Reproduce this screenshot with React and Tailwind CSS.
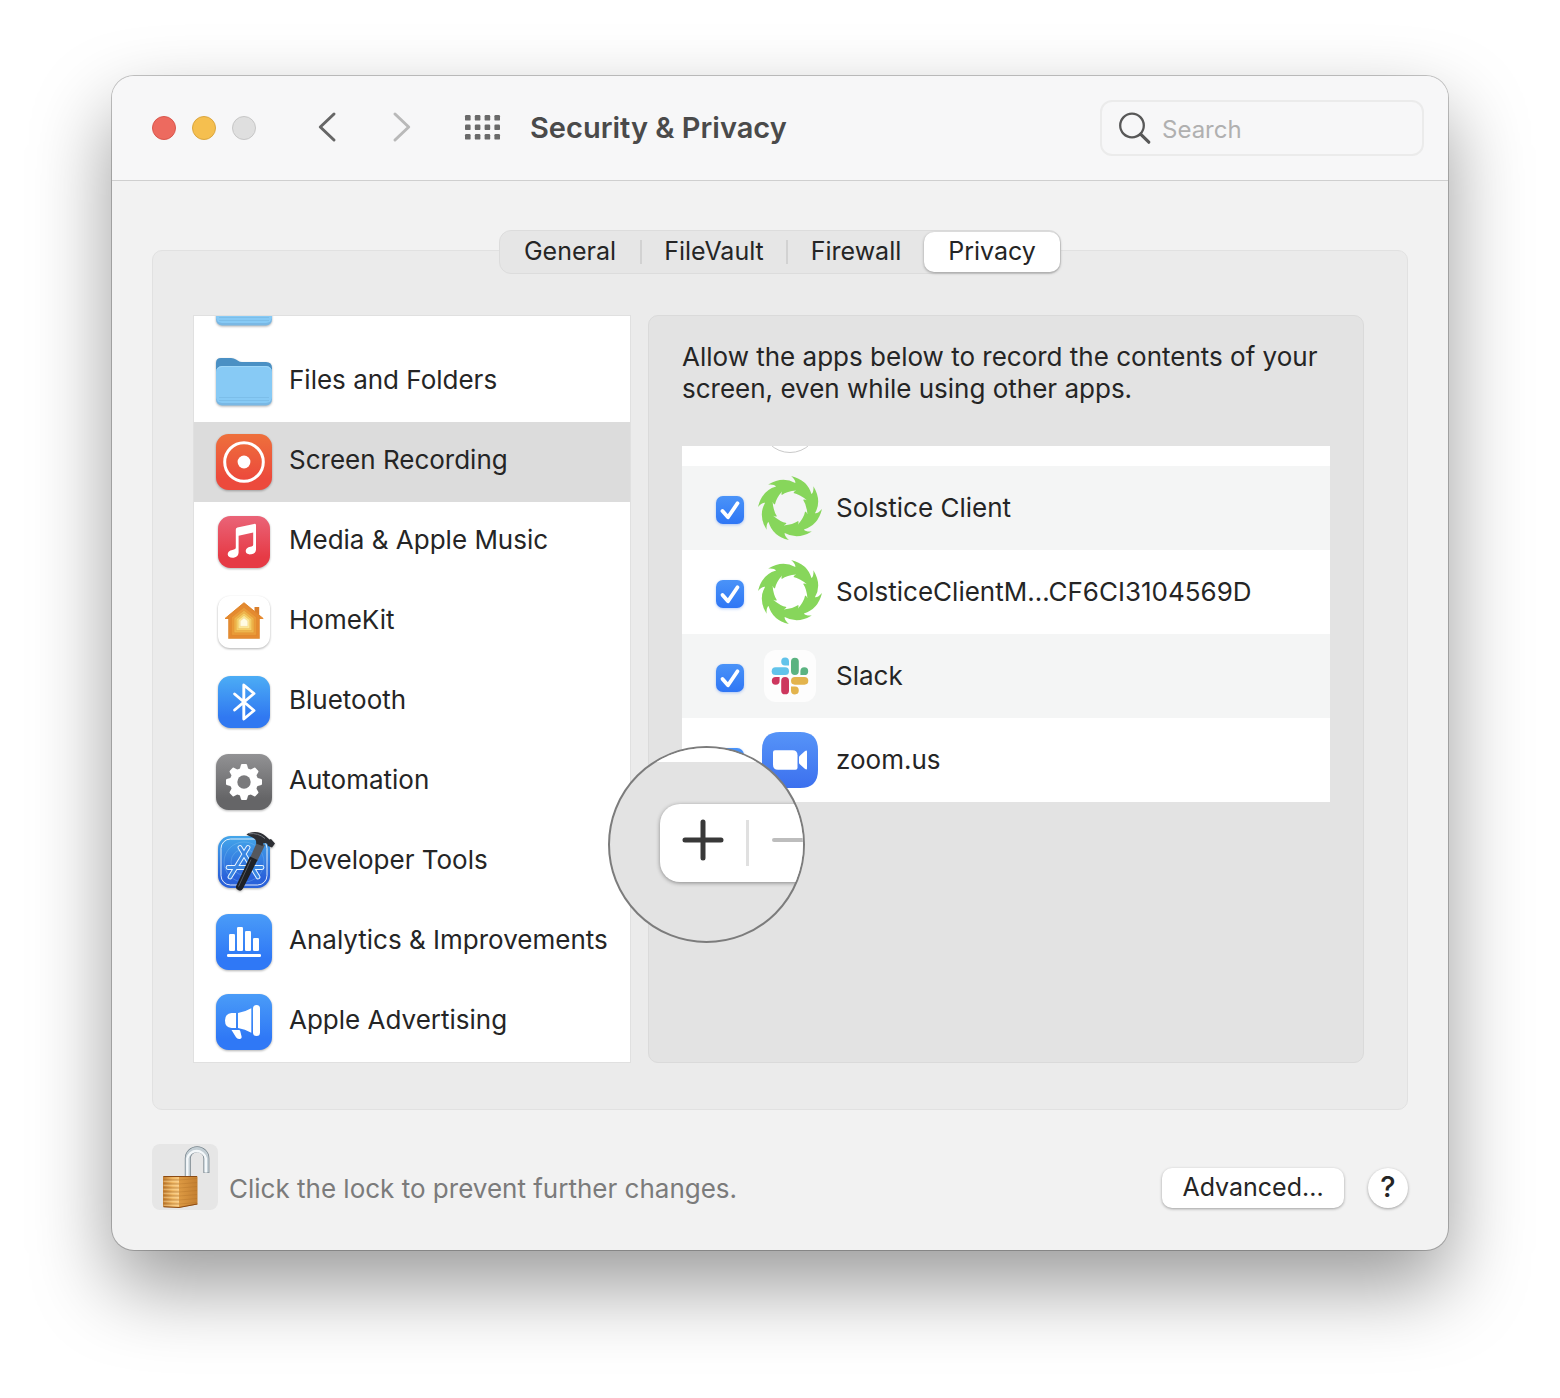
import { useState } from "react";

function Tile({ id, from, to, inset = 0 }) {
  const size = 56 - inset * 2;
  return (
    <>
      <linearGradient id={id} x1="0" y1="0" x2="0" y2="1">
        <stop offset="0" stopColor={from} />
        <stop offset="0.8" stopColor={to} />
      </linearGradient>
      <rect x={inset} y={inset} width={size} height={size} rx="12.5" fill={`url(#${id})`} />
    </>
  );
}

function IconBox({ children }) {
  return (
    <svg
      viewBox="0 0 56 56"
      className="size-14 shrink-0 overflow-visible drop-shadow-[0_1px_1px_rgba(0,0,0,0.3)]"
      aria-hidden="true"
    >
      {children}
    </svg>
  );
}

function FolderIcon() {
  return (
    <IconBox>
      <path d="M0 18V9q0-5 5-5h10q3 0 5 1.500l2 1.300q1.500 1.200 4 1.200h24q6 0 6 6v6z" fill="#4a90c4" />
      <rect y="12" width="56" height="39.5" rx="6" fill="#7ab8e4" />
      <rect y="12" width="56" height="37" rx="6" fill="#87caf5" />
      <path d="M3 43.500h50M3 46.500h50" stroke="#7abbe6" strokeWidth="0.8" />
      <path d="M1 15.500q1.500-3 5-3h44q3.500 0 5 3" fill="none" stroke="#a5dafa" strokeWidth="0.8" />
    </IconBox>
  );
}

function ScreenRecordingIcon() {
  return (
    <IconBox>
      <Tile id="rec" from="#ee703c" to="#ec4a3c" />
      <circle cx="28" cy="28" r="19.3" fill="none" stroke="#fff" strokeWidth="3" />
      <circle cx="28" cy="28" r="6.4" fill="#fff" />
    </IconBox>
  );
}

function MusicIcon() {
  return (
    <IconBox>
      <Tile id="music" from="#ea6478" to="#e63a45" inset={2} />
      <path
        d="M19.800 15.400q0-1.500 1.600-1.900l16.600-3.600q2-.4 2 1.300V35.500c0 2.700-1.800 4.200-4.700 4.800-3 .6-5.600-.7-5.600-3.200 0-2.400 2-3.800 4.600-4.300 2-.4 2.900-.9 2.900-2.300V18.400L22.600 21.700V38.500c0 2.700-1.700 4.600-4.900 5.200-3.200.5-6-.8-6-3.400 0-2.300 1.800-3.700 4.700-4.300 2.400-.4 3.400-.9 3.400-2.400z"
        fill="#fff"
      />
    </IconBox>
  );
}

const HOUSES = [
  { scale: 1, fill: "#e58a30" },
  { scale: 0.8, fill: "#eb9c39" },
  { scale: 0.64, fill: "#efb54c" },
  { scale: 0.5, fill: "#f5d068" },
  { scale: 0.37, fill: "#fbe99a" },
  { scale: 0.24, fill: "#fffbe3" },
];

function HomeKitIcon() {
  return (
    <IconBox>
      <rect x="2" y="2" width="52" height="52" rx="12" fill="#fff" />
      <path d="M38.500 13h4.700v10h-4.700z" fill="#d97f2c" />
      <path d="M9 24.500 28 8.700 47.200 24.500z" fill="#e58a30" stroke="#e58a30" strokeLinejoin="round" />
      {HOUSES.map(({ scale, fill }) => (
        <path
          key={scale}
          d="M-15.500 16V-6.500L0-19 15.500-6.500V16z"
          transform={`translate(28 28.5) scale(${scale})`}
          fill={fill}
          stroke="#d9862b"
          strokeWidth="0.9"
          strokeOpacity="0.6"
          strokeLinejoin="round"
        />
      ))}
    </IconBox>
  );
}

function BluetoothIcon() {
  return (
    <IconBox>
      <Tile id="bluetooth" from="#4cadf5" to="#3078f1" inset={2} />
      <path
        d="M18.600 20 38 36.500 27.800 45V11L38 19.500 18.600 36"
        fill="none"
        stroke="#fff"
        strokeWidth="2.9"
        strokeLinecap="round"
        strokeLinejoin="round"
      />
    </IconBox>
  );
}

function AutomationIcon() {
  return (
    <IconBox>
      <Tile id="gear" from="#929294" to="#656567" />
      <circle cx="28" cy="28" r="14" fill="#fff" />
      {[0, 45, 90, 135, 180, 225, 270, 315].map((angle) => (
        <path
          key={angle}
          d="M23.500 16 25 10.700q.3-.7 1-.7h4q.7 0 1 .7L32.500 16z"
          transform={`rotate(${angle} 28 28)`}
          fill="#fff"
        />
      ))}
      <circle cx="28" cy="28" r="6.7" fill="#7a7a7c" />
    </IconBox>
  );
}

const TOOLS_PATH = "M32 13.500 14 43M24 13.500 42 43M12 33.500h34";

function DeveloperToolsIcon() {
  return (
    <IconBox>
      <Tile id="tools" from="#44a6ea" to="#2a62da" inset={2} />
      <rect x="5" y="5" width="46" height="46" rx="9.5" fill="none" stroke="#fff" strokeOpacity="0.85" />
      <circle cx="28" cy="28" r="20" fill="none" stroke="#8fcaf5" strokeWidth="0.6" strokeOpacity="0.5" />
      <circle cx="28" cy="28" r="13" fill="none" stroke="#8fcaf5" strokeWidth="0.6" strokeOpacity="0.5" />
      <path d={TOOLS_PATH} fill="none" stroke="#e9f5ff" strokeWidth="4.8" strokeLinecap="round" />
      <path d={TOOLS_PATH} fill="none" stroke="#3a86e2" strokeWidth="2.8" strokeLinecap="round" />
      <path d="M41 8 49 11 41 27.500 34 24z" fill="#55585e" />
      <path d="M34 22.500 41.500 26 27 54.500q-1.500 3-4.500 1.800-3.500-1.300-2.300-4.500z" fill="#1f2126" />
      <path d="M35 25.500 22.500 52.500" stroke="#555961" strokeWidth="1" />
      <path
        d="M30.500.5Q33-2 39-2q6 0 10.500 4l4 3.500 1.500-.5 4 4.500-3 4-4-1.500-1-2.500-3.500-.5-1 3-6.500-2.500Q41 5.500 36.500 3.500 33 2 30.500.5z"
        fill="#2c2e33"
      />
      <path d="M33-.2Q42-1.500 49 4.500" fill="none" stroke="#777b82" strokeWidth="1" />
    </IconBox>
  );
}

function AnalyticsIcon() {
  return (
    <IconBox>
      <Tile id="analytics" from="#4a9cf8" to="#2f78f6" />
      <g fill="#fff">
        <rect x="13" y="20" width="6" height="17" rx="1.3" />
        <rect x="21" y="13" width="6" height="24" rx="1.3" />
        <rect x="29" y="17" width="6" height="20" rx="1.3" />
        <rect x="37" y="24" width="6" height="13" rx="1.3" />
        <rect x="11" y="40" width="34" height="3" rx="1.3" />
      </g>
    </IconBox>
  );
}

function AdvertisingIcon() {
  return (
    <IconBox>
      <Tile id="ads" from="#4a9cf8" to="#2f78f6" />
      <g fill="#fff">
        <rect x="37" y="11" width="7" height="31" rx="3.5" />
        <path d="M22 19Q29 18 35.300 14.300V38.800Q29 35 22 34z" />
        <path d="M20 19V34H15.500Q9 33.500 9 26.500T15.500 19z" />
        <path d="M15.500 36H23q1 0 1.200 1l1.400 5.500q.4 2.300-2 2.500-2.300.3-3.600-1.700z" />
      </g>
    </IconBox>
  );
}

const CATEGORIES = [
  { label: "Files and Folders", Icon: FolderIcon },
  { label: "Screen Recording", Icon: ScreenRecordingIcon },
  { label: "Media & Apple Music", Icon: MusicIcon },
  { label: "HomeKit", Icon: HomeKitIcon },
  { label: "Bluetooth", Icon: BluetoothIcon },
  { label: "Automation", Icon: AutomationIcon },
  { label: "Developer Tools", Icon: DeveloperToolsIcon },
  { label: "Analytics & Improvements", Icon: AnalyticsIcon },
  { label: "Apple Advertising", Icon: AdvertisingIcon },
];

// point on a circle around the middle of the 64px icon, 0deg = top
function polar(radius, degrees) {
  const a = ((degrees - 90) * Math.PI) / 180;
  return `${(32 + radius * Math.cos(a)).toFixed(1)} ${(32 + radius * Math.sin(a)).toFixed(1)}`;
}

// closed ring of eight hooked teeth; dir -1 hooks them the other way
function swirl({ tip, mid, notch, nose, hook, start, dir }) {
  let d = `M${polar(tip, start)}`;
  for (let i = 0; i < 8; i++) {
    const t = start + dir * i * 45;
    d += `Q${polar(mid, t + dir * 30)} ${polar(notch, t + dir * (45 + hook))}`;
    d += `Q${polar(nose, t + dir * (45 + hook))} ${polar(tip, t + dir * 45)}`;
  }
  return `${d}Z`;
}

const SWIRL_PATH =
  swirl({ tip: 32, mid: 33, notch: 25.5, nose: 28.5, hook: 10, start: 2, dir: 1 }) +
  swirl({ tip: 18.5, mid: 17, notch: 15.5, nose: 17, hook: 7, start: 20, dir: -1 });

function SolsticeIcon() {
  return (
    <svg viewBox="0 0 64 64" className="size-16 shrink-0" aria-hidden="true">
      <path d={SWIRL_PATH} fill="#87d65b" fillRule="evenodd" />
    </svg>
  );
}

function SlackIcon() {
  return (
    <svg viewBox="0 0 64 64" className="size-16 shrink-0" aria-hidden="true">
      <rect x="6" y="6" width="52" height="52" rx="12" fill="#fdfdfd" />
      <g fill="#62c3ea">
        <rect x="13.7" y="23.3" width="17.3" height="7.7" rx="3.85" />
        <path d="M31 21.400h-4a3.900 3.900 0 1 1 4-3.900z" />
      </g>
      <g fill="#5bb381">
        <rect x="33" y="13.7" width="7.8" height="17.3" rx="3.9" />
        <path d="M42.400 31v-4a3.900 3.900 0 1 1 3.900 4z" />
      </g>
      <g fill="#cd375e">
        <rect x="23.2" y="33" width="7.8" height="17.3" rx="3.9" />
        <path d="M21.600 33v4a3.900 3.900 0 1 1-3.900-4z" />
      </g>
      <g fill="#e3b44d">
        <rect x="33" y="33" width="17.3" height="7.7" rx="3.85" />
        <path d="M33 42.600h4a3.900 3.900 0 1 1-4 3.900z" />
      </g>
    </svg>
  );
}

function ZoomIcon() {
  return (
    <svg viewBox="0 0 64 64" className="size-16 shrink-0" aria-hidden="true">
      <linearGradient id="zoom" x1="0" y1="0" x2="0" y2="1">
        <stop offset="0" stopColor="#5694f8" />
        <stop offset="1" stopColor="#3c70ee" />
      </linearGradient>
      <path d="M22 4h20q18 0 18 18v20q0 18-18 18H22Q4 60 4 42V22Q4 4 22 4z" fill="url(#zoom)" />
      <path d="M17 22.300h17.500q5 0 5 5v12.400q0 2-2 2H20q-5 0-5-5V24.300q0-2 2-2z" fill="#fff" />
      <path d="M41 29.500q0-1 .8-1.700l5-4.500q2.200-1.800 2.200.5v16.400q0 2.300-2.200.5l-5-4.500q-.8-.7-.8-1.700z" fill="#fff" />
    </svg>
  );
}

function BlankAppIcon() {
  return (
    <svg viewBox="0 0 64 64" className="size-16 shrink-0" aria-hidden="true">
      <circle cx="32" cy="32" r="28.5" fill="#fff" stroke="#c9c9c9" />
    </svg>
  );
}

const APPS = [
  { label: "Solstice Client", Icon: SolsticeIcon },
  { label: "SolsticeClientM…CF6CI3104569D", Icon: SolsticeIcon },
  { label: "Slack", Icon: SlackIcon },
  { label: "zoom.us", Icon: ZoomIcon },
];

function AppRow({ label, Icon }) {
  return (
    <li className="odd:bg-white even:bg-[#f4f5f5]">
      <label className="flex h-21 items-center gap-3.5 pl-[34px]">
        <span className="mt-1 grid size-7 shrink-0">
          <input
            type="checkbox"
            defaultChecked
            className="peer col-start-1 row-start-1 size-7 appearance-none rounded-[7px] border border-gray-300 bg-white shadow-[0_1px_3px_rgba(40,110,240,0.35)] checked:border-0 checked:bg-linear-to-b checked:from-[#4a93f8] checked:to-[#2f76f5]"
          />
          <svg
            viewBox="0 0 28 28"
            className="pointer-events-none invisible col-start-1 row-start-1 peer-checked:visible"
            aria-hidden="true"
          >
            <path
              d="M6.500 15 12 21.300 21.500 7.300"
              fill="none"
              stroke="#fff"
              strokeWidth="3.8"
              strokeLinecap="round"
              strokeLinejoin="round"
            />
          </svg>
        </span>
        <Icon />
        <span>{label}</span>
      </label>
    </li>
  );
}

function Magnifier() {
  return (
    <div className="absolute top-[430px] -left-[41px] z-10 size-[197px] overflow-hidden rounded-full border-2 border-[#7c7c7c] bg-[#e3e3e3]">
      <div className="h-3.5 bg-white" />
      <div className="mt-[42px] ml-[50px] flex h-[78px] w-44 items-center rounded-[20px] bg-white shadow-[0_1px_4px_rgba(0,0,0,0.4)]">
        <button type="button" aria-label="Add app" className="grid h-full w-[86px] place-items-center pb-1.5">
          <svg viewBox="0 0 42 42" className="size-[42px]" aria-hidden="true">
            <path d="M3 21h36M21 3v36" stroke="#383838" strokeWidth="5" strokeLinecap="round" />
          </svg>
        </button>
        <span className="h-[46px] w-[3px] bg-[#e0e0e0]" />
        <button type="button" aria-label="Remove app" className="grid h-full w-[86px] place-items-center pb-1.5">
          <svg viewBox="0 0 42 42" className="size-[42px]" aria-hidden="true">
            <path d="M3 21h36" stroke="#bdbdbd" strokeWidth="4" strokeLinecap="round" />
          </svg>
        </button>
      </div>
    </div>
  );
}

function TitleBar() {
  return (
    <header className="flex h-[105px] items-center border-b border-[#cfcfcf] bg-[#f7f7f8] pr-6 pl-10">
      <div className="flex gap-4">
        <button type="button" aria-label="Close" className="size-6 rounded-full border border-[#d9574d] bg-[#ed6a5f]" />
        <button type="button" aria-label="Minimize" className="size-6 rounded-full border border-[#dba63f] bg-[#f5bf4f]" />
        <button type="button" aria-label="Full screen" className="size-6 rounded-full border border-[#c6c6c6] bg-[#dfdfdf]" />
      </div>
      <button type="button" aria-label="Back" className="ml-[51px] h-10 w-10">
        <svg viewBox="0 0 40 40" fill="none" aria-hidden="true">
          <path d="M27 6 13.300 19 27 32" stroke="#666" strokeWidth="3" strokeLinecap="round" strokeLinejoin="round" />
        </svg>
      </button>
      <button type="button" aria-label="Forward" className="ml-[35px] h-10 w-10">
        <svg viewBox="0 0 40 40" fill="none" aria-hidden="true">
          <path d="M13 6 26.700 19 13 32" stroke="#b9b9b9" strokeWidth="3" strokeLinecap="round" strokeLinejoin="round" />
        </svg>
      </button>
      <button type="button" aria-label="Show all" className="ml-[41px] h-10 w-10">
        <svg viewBox="0 0 40 40" fill="#6a6a6a" aria-hidden="true">
          {[7, 16.5, 26].map((y) =>
            [2, 11.8, 21.6, 31.4].map((x) => (
              <rect key={`${x}-${y}`} x={x} y={y} width="5.6" height="5.6" rx="1.2" />
            ))
          )}
        </svg>
      </button>
      <h1 className="ml-[27px] text-[29px] leading-8 font-semibold text-[#4a4a4a]">Security &amp; Privacy</h1>
      <label className="ml-auto flex h-14 w-[324px] items-center gap-2.5 rounded-xl border-2 border-[#ebebeb] pl-4">
        <svg viewBox="0 0 34 34" fill="none" className="size-[34px] shrink-0" aria-hidden="true">
          <circle cx="14" cy="14.5" r="11.8" stroke="#585858" strokeWidth="2.3" />
          <path d="M22.600 23.200 30.800 31.200" stroke="#585858" strokeWidth="3.2" strokeLinecap="round" />
        </svg>
        <input
          type="search"
          placeholder="Search"
          aria-label="Search"
          className="w-full min-w-0 bg-transparent pt-1 text-[24px] outline-none placeholder:text-[#b0b0b0]"
        />
      </label>
    </header>
  );
}

function Tabs({ active, onSelect }) {
  const tabs = ["General", "FileVault", "Firewall", "Privacy"];
  return (
    <div
      role="tablist"
      className="relative mx-auto -mb-6 grid h-11 w-[562px] grid-cols-[142fr_146fr_136fr_136fr] items-center rounded-xl border border-[#dcdcdc] bg-[#e6e6e6] text-[25px]"
    >
      {tabs.map((tab, i) => (
        <div key={tab} className="flex h-full items-center">
          <button
            type="button"
            role="tab"
            aria-selected={tab === active}
            onClick={() => onSelect(tab)}
            className="h-10 grow rounded-[10px] pb-0.5 aria-selected:bg-white aria-selected:shadow-[0_1px_3px_rgba(0,0,0,0.35)]"
          >
            {tab}
          </button>
          {i < 2 && <span className="h-6 w-0.5 bg-[#d2d2d2]" />}
        </div>
      ))}
    </div>
  );
}

function LockIcon() {
  return (
    <svg viewBox="0 0 66 66" className="size-[66px]" aria-hidden="true">
      <linearGradient id="lockFront" x1="0" x2="1">
        <stop offset="0" stopColor="#c07a2c" />
        <stop offset="0.6" stopColor="#f0b763" />
        <stop offset="1" stopColor="#f7c880" />
      </linearGradient>
      <linearGradient id="lockSide" x1="0" x2="1">
        <stop offset="0" stopColor="#dd9a43" />
        <stop offset="1" stopColor="#c47f30" />
      </linearGradient>
      <path d="M35.800 33V14.500a9.300 9.300 0 0 1 18.600 0V29" fill="none" stroke="#75828a" strokeWidth="6" />
      <path d="M35.800 33V14.500a9.300 9.300 0 0 1 18.600 0V28.500" fill="none" stroke="#c3ced4" strokeWidth="4.6" />
      <path d="M35.300 33V14.500a9.500 9.500 0 0 1 18.600 0V28.500" fill="none" stroke="#f4f8fa" strokeWidth="2.4" />
      <path d="M11 33q0-1 1-1h15v31.800L12 63q-1 0-1-1z" fill="url(#lockFront)" />
      <path d="M27 32h17.500q1 0 1 1v27.500L27 63.800z" fill="url(#lockSide)" />
      {[36, 40, 44, 48, 52, 56, 60].map((y) => (
        <g key={y} fill="none">
          <path d={`M11.500 ${y}H27`} stroke="#8f5319" strokeOpacity="0.5" />
          <path d={`M11.500 ${y + 1.2}H27`} stroke="#ffe0a3" strokeOpacity="0.6" />
          <path d={`M27 ${y}L45 ${y - 1.5}`} stroke="#a5651f" strokeOpacity="0.35" strokeWidth="0.8" />
        </g>
      ))}
      <path d="M11.500 32.500h33.500" stroke="#8a4a14" />
      <path d="M11.500 62.800 27 63.500 45.300 60" fill="none" stroke="#8a4a14" />
    </svg>
  );
}

export default function App() {
  const [tab, setTab] = useState("Privacy");
  const [category, setCategory] = useState("Screen Recording");

  return (
    <div className="min-h-screen bg-white px-28 pt-19 pb-[148px] font-['Inter',sans-serif] text-[26px] leading-8 text-[#252525]">
      <main className="overflow-hidden rounded-[22px] bg-[#f2f2f2] shadow-[0_0_0_1px_rgba(0,0,0,0.22),0_36px_80px_rgba(0,0,0,0.4)]">
        <TitleBar />
        <div className="px-10 pt-[49px] pb-10">
          <Tabs active={tab} onSelect={setTab} />
          <section className="grid grid-cols-[438fr_716fr] gap-[17px] rounded-[10px] border border-[#e1e1e1] bg-[#ebebeb] pt-16 pr-[43px] pb-[46px] pl-10">
            <ul className="border border-[#e0e0e0] bg-white">
              <li className="flex h-[26px] items-end overflow-hidden pl-[22px]">
                <div className="flex h-20 shrink-0 items-center">
                  <FolderIcon />
                </div>
              </li>
              {CATEGORIES.map(({ label, Icon }) => (
                <li key={label}>
                  <button
                    type="button"
                    aria-pressed={label === category}
                    onClick={() => setCategory(label)}
                    className="flex h-20 w-full items-center gap-[17px] pl-[22px] text-left whitespace-nowrap aria-pressed:bg-[#dcdcdc]"
                  >
                    <Icon />
                    <span className="pb-1">{label}</span>
                  </button>
                </li>
              ))}
            </ul>
            <div className="relative rounded-[10px] border border-[#dadada] bg-[#e3e3e3] px-[33px] pt-[25px]">
              <p>Allow the apps below to record the contents of your screen, even while using other apps.</p>
              <ul className="mt-[41px]">
                <li className="flex h-5 items-end overflow-hidden bg-white pl-[76px]">
                  <div className="flex h-21 shrink-0 items-center">
                    <BlankAppIcon />
                  </div>
                </li>
                {APPS.map((app) => (
                  <AppRow key={app.label} {...app} />
                ))}
              </ul>
              <Magnifier />
            </div>
          </section>
          <footer className="mt-[34px] flex items-end">
            <button type="button" aria-label="Lock" className="rounded-lg bg-[#e6e6e6]">
              <LockIcon />
            </button>
            <p className="mb-[5px] ml-[11px] text-[#7b7b7b]">Click the lock to prevent further changes.</p>
            <div className="mb-0.5 ml-auto flex items-center gap-6">
              <button
                type="button"
                className="h-10 w-[182px] rounded-[10px] bg-white pb-0.5 text-[25px] shadow-[0_1px_3px_rgba(0,0,0,0.35)]"
              >
                Advanced...
              </button>
              <button
                type="button"
                aria-label="Help"
                className="size-10 rounded-full bg-white pb-0.5 text-[29px] font-medium shadow-[0_1px_3px_rgba(0,0,0,0.35)]"
              >
                ?
              </button>
            </div>
          </footer>
        </div>
      </main>
    </div>
  );
}
